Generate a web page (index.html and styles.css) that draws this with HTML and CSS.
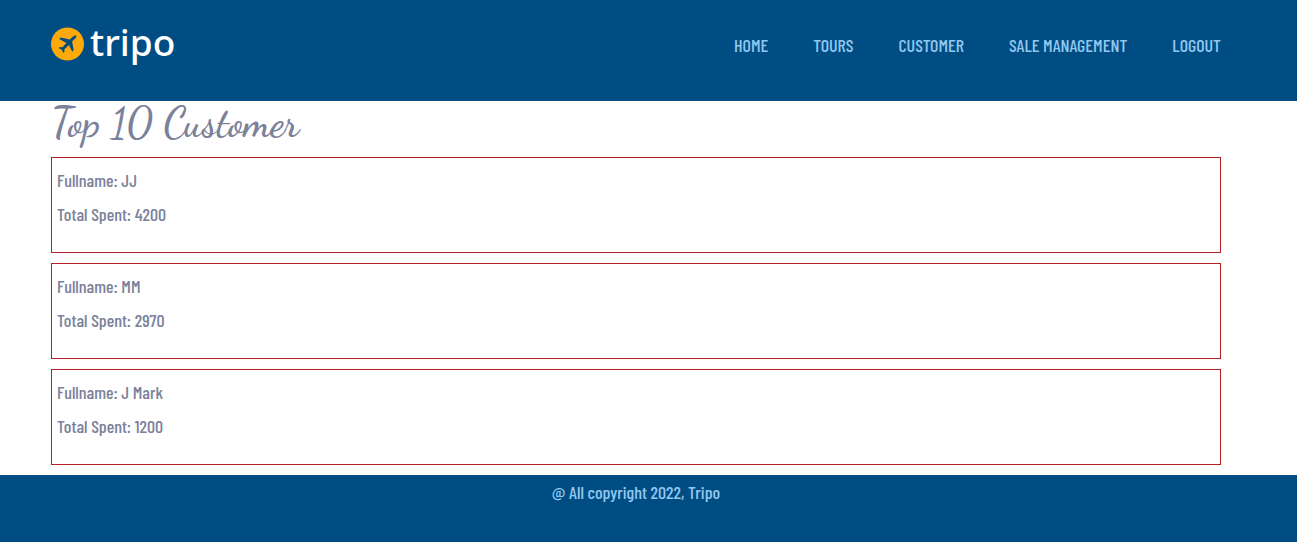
FILE: index.html
```html
<!DOCTYPE html>
<html lang="en">
<head>
<meta charset="utf-8">
<title>Tripo - Top 10 Customer</title>
<link rel="stylesheet" href="styles.css">
</head>
<body>
<header class="header">
  <div class="container header-row">
    <a class="logo" href="#">
      <svg class="logo-mark" viewBox="0 0 34 34" aria-hidden="true">
        <circle cx="16.5" cy="17" r="16.5" fill="#fda90a"/>
        <path fill="#004d84" d="M25.2 8.7c-1.2-.5-2.8.3-3.8 1.3l-2.6 2.5-9-2-1.7 1.6 7.4 3.8-4.1 4.4-2.7-.2-1 1.1 3.1 1.5 1.6 3.2 1.1-1.1-.1-2.6 4.5-4.1 3.3 6.6 1.5-1.6-1.6-8.5 2.6-2.5c1-1 2.1-2.3 1.5-3.4z"/>
      </svg>
      <span>tripo</span>
    </a>
    <nav class="nav">
      <a href="#">HOME</a>
      <a href="#">TOURS</a>
      <a href="#">CUSTOMER</a>
      <a href="#">SALE MANAGEMENT</a>
      <a href="#">LOGOUT</a>
    </nav>
  </div>
</header>
<main class="container">
  <h1 class="title">Top 10 Customer</h1>
  <section class="card">
    <p>Fullname: JJ</p>
    <p>Total Spent: 4200</p>
  </section>
  <section class="card">
    <p>Fullname: MM</p>
    <p>Total Spent: 2970</p>
  </section>
  <section class="card">
    <p>Fullname: J Mark</p>
    <p>Total Spent: 1200</p>
  </section>
</main>
<footer class="footer">
  <div class="container">@ All copyright 2022, Tripo</div>
</footer>
</body>
</html>
```
FILE: styles.css
```css
* { box-sizing: border-box; }
body {
  display: flex;
  flex-direction: column;
  min-height: 100vh;
  margin: 0;
  background: #fff;
  color: #7b819a;
  font: 500 18px/24px "Barlow Condensed", "Roboto Condensed", "Liberation Sans", sans-serif;
}
a { color: inherit; text-decoration: none; }
.container { padding: 0 76px 0 51px; }
.header { background: #004d84; color: #92c8f0; }
.header-row {
  display: flex;
  justify-content: space-between;
  align-items: flex-start;
  padding-top: 20px;
  padding-bottom: 37px;
}
.logo {
  display: flex;
  align-items: flex-start;
  gap: 5px;
  color: #fff;
  font: 500 37px/44px "Noto Sans", "Open Sans", sans-serif;
}
.logo-mark { width: 34px; height: 34px; margin-top: 7px; }
.nav { display: flex; gap: 45px; padding-top: 13px; }
.title {
  margin: 0 0 12px;
  font: 600 41px/44px "Satisfy", "Dancing Script", cursive;
}
.card {
  margin-bottom: 10px;
  padding: 10px 5px 16px;
  border: 1px solid #b02024;
}
.card p { margin: 0 0 10px; }
.footer {
  flex: 1;
  padding: 5px 0 38px;
  background: #004d84;
  color: #92c8f0;
  text-align: center;
}
```
